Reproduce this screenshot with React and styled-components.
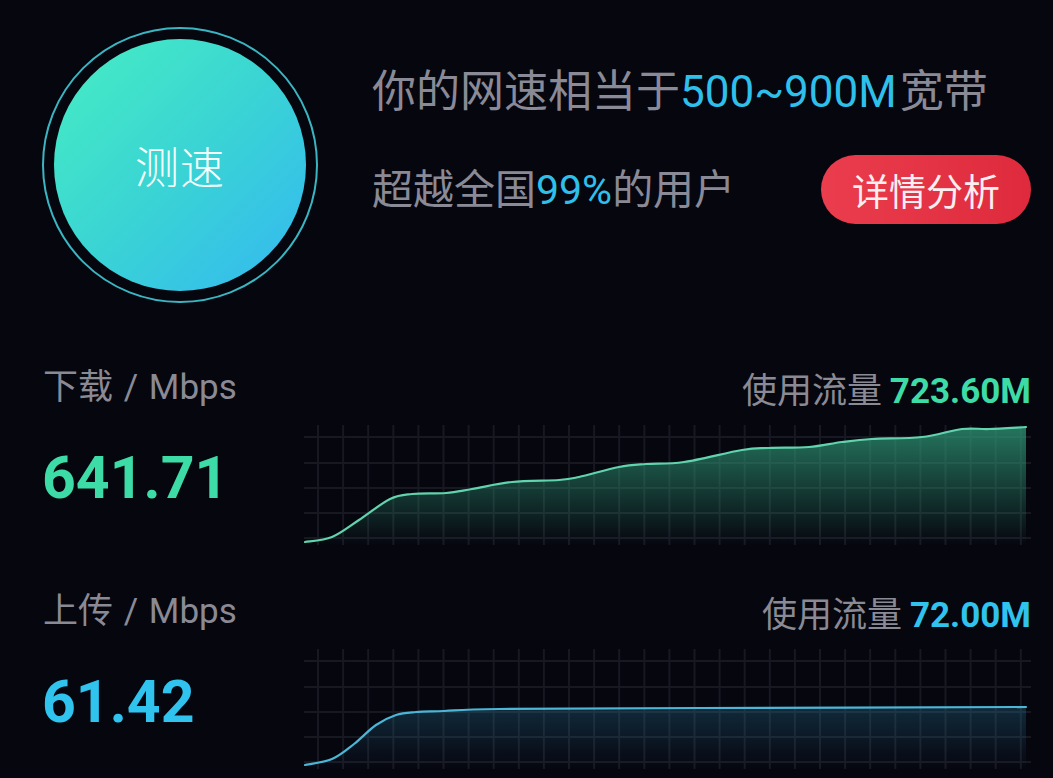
import React from "react";
import styled, { createGlobalStyle } from "styled-components";

const GlobalStyle = createGlobalStyle`
  html, body {
    margin: 0;
    padding: 0;
    background: #06060f;
  }
  body {
    font-family: "Roboto", "Noto Sans CJK SC", sans-serif;
  }
`;

const metrics = [
  {
    label: "下载",
    value: "641.71",
    usage: "723.60M",
    color: "#3ddba6",
    line: "#62d4ad",
    fill: "#2f9a78",
    fillOpacity: 0.75,
    points: [
      [1, 117], [28, 112], [55, 95], [86, 74], [108, 69], [142, 68], [168, 64],
      [208, 57], [255, 55], [275, 52], [315, 42], [342, 39], [380, 37],
      [438, 25], [465, 23], [505, 22], [538, 17], [568, 14], [618, 12], [658, 4],
      [685, 4], [722, 2],
    ],
  },
  {
    label: "上传",
    value: "61.42",
    usage: "72.00M",
    color: "#2fc3ee",
    line: "#4bb6d6",
    fill: "#2a7fa0",
    fillOpacity: 0.3,
    points: [
      [1, 116], [28, 110], [50, 95], [72, 76], [92, 66], [112, 63], [140, 62],
      [195, 60], [395, 59], [722, 58],
    ],
  },
];

const W = 727;
const H = 120;

// catmull-rom -> cubic bezier, keeps the curve through every sample point
const smoothPath = (pts) => {
  let d = `M${pts[0][0]},${pts[0][1]}`;
  for (let i = 0; i < pts.length - 1; i++) {
    const p0 = pts[i - 1] || pts[i];
    const p1 = pts[i];
    const p2 = pts[i + 1];
    const p3 = pts[i + 2] || p2;
    const c1x = p1[0] + (p2[0] - p0[0]) / 6;
    const c1y = p1[1] + (p2[1] - p0[1]) / 6;
    const c2x = p2[0] - (p3[0] - p1[0]) / 6;
    const c2y = p2[1] - (p3[1] - p1[1]) / 6;
    d += ` C${c1x.toFixed(1)},${c1y.toFixed(1)} ${c2x.toFixed(1)},${c2y.toFixed(1)} ${p2[0]},${p2[1]}`;
  }
  return d;
};

const Chart = ({ id, points, line, fill, fillOpacity }) => {
  const curve = smoothPath(points);
  const last = points[points.length - 1];
  const area = `${curve} L${last[0]},${H} L${points[0][0]},${H} Z`;
  const vLines = [];
  for (let x = 14; x <= 718; x += 25.1) vLines.push(x);
  const hLines = [12, 38, 63, 88, 113];
  return (
    <ChartSvg viewBox={`0 0 ${W} ${H}`} width={W} height={H}>
      <defs>
        <linearGradient id={`fill-${id}`} x1="0" y1="0" x2="0" y2="1">
          <stop offset="0" stopColor={fill} stopOpacity={fillOpacity} />
          <stop offset="1" stopColor={fill} stopOpacity="0" />
        </linearGradient>
      </defs>
      {vLines.map((x) => (
        <line key={x} x1={x} y1="0" x2={x} y2={H} stroke="#181822" strokeWidth="2" />
      ))}
      {hLines.map((y) => (
        <line key={y} x1="0" y1={y} x2={W} y2={y} stroke="#181822" strokeWidth="2" />
      ))}
      <path d={area} fill={`url(#fill-${id})`} />
      <path d={curve} fill="none" stroke={line} strokeWidth="2.2" strokeLinecap="round" />
    </ChartSvg>
  );
};

const App = () => {
  return (
    <>
      <GlobalStyle />
      <Page>
        <Top>
          <Ring>
            <SpeedButton>测速</SpeedButton>
          </Ring>
          <Info>
            <Headline>
              你的网速相当于<Accent>500~900M</Accent> 宽带
            </Headline>
            <InfoRow>
              <SubLine>
                超越全国<Accent>99%</Accent>的用户
              </SubLine>
              <DetailButton>详情分析</DetailButton>
            </InfoRow>
          </Info>
        </Top>

        {metrics.map((m, i) => (
          <Metric key={m.label}>
            <Label>{m.label} / Mbps</Label>
            <Usage>
              使用流量 <UsageValue color={m.color}>{m.usage}</UsageValue>
            </Usage>
            <Value color={m.color}>{m.value}</Value>
            <Chart id={i} {...m} />
          </Metric>
        ))}
      </Page>
    </>
  );
};

const Page = styled.div`
  width: 1053px;
  height: 778px;
  overflow: hidden;
  box-sizing: border-box;
  padding: 27px 22px 0 42px;
  background: #06060f;
`;

const Top = styled.div`
  display: flex;
  align-items: flex-start;
  gap: 54px;
  margin-bottom: 65px;
`;

const Ring = styled.div`
  width: 276px;
  height: 276px;
  flex-shrink: 0;
  box-sizing: border-box;
  border-radius: 50%;
  border: 2.5px solid #3ab6c2;
  display: flex;
  align-items: center;
  justify-content: center;
`;

const SpeedButton = styled.div`
  width: 252px;
  height: 252px;
  border-radius: 50%;
  background: linear-gradient(135deg, #46eec2 0%, #3ad4d4 50%, #34b8f2 100%);
  display: flex;
  align-items: center;
  justify-content: center;
  color: #f4fffc;
  font-family: "Noto Sans CJK SC", sans-serif;
  font-size: 44px;
  font-weight: 300;
  letter-spacing: 1px;
`;

const Info = styled.div`
  flex: 1;
  display: flex;
  flex-direction: column;
  padding-top: 35px;
`;

const Headline = styled.div`
  font-family: "Roboto", "Noto Sans CJK SC", sans-serif;
  font-size: 44px;
  line-height: 60px;
  color: #8a8a97;
  white-space: nowrap;
  word-spacing: -8px;
`;

const Accent = styled.span`
  color: #2ec0ea;
`;

const InfoRow = styled.div`
  display: flex;
  align-items: center;
  justify-content: space-between;
  margin-top: 33px;
`;

const SubLine = styled.div`
  font-family: "Roboto", "Noto Sans CJK SC", sans-serif;
  font-size: 41px;
  line-height: 60px;
  color: #8a8a97;
  white-space: nowrap;
`;

const DetailButton = styled.div`
  width: 210px;
  height: 69px;
  border-radius: 35px;
  background: linear-gradient(90deg, #ea3d4d, #de2a3c);
  color: #fbeef0;
  font-family: "Noto Sans CJK SC", sans-serif;
  font-size: 37px;
  display: flex;
  align-items: center;
  justify-content: center;
`;

const Metric = styled.div`
  display: grid;
  grid-template-columns: 262px 1fr;
  grid-template-rows: 40px 137px;
  margin-bottom: 47px;
`;

const Label = styled.div`
  font-family: "Roboto", "Noto Sans CJK SC", sans-serif;
  font-size: 35px;
  line-height: 40px;
  color: #8a8a95;
  padding-left: 1px;
  white-space: nowrap;
  word-spacing: 2px;
`;

const Usage = styled.div`
  justify-self: end;
  font-family: "Noto Sans CJK SC", sans-serif;
  font-size: 35px;
  line-height: 40px;
  color: #8a8a95;
  white-space: nowrap;
`;

const UsageValue = styled.span`
  font-family: "Roboto", sans-serif;
  font-weight: 700;
  font-size: 35px;
  color: ${(p) => p.color};
`;

const Value = styled.div`
  align-self: center;
  font-family: "Roboto", sans-serif;
  font-weight: 700;
  font-size: 59px;
  line-height: 70px;
  color: ${(p) => p.color};
  margin-bottom: 8px;
  margin-top: 10px;
`;

const ChartSvg = styled.svg`
  display: block;
  align-self: end;
`;

export default App;
